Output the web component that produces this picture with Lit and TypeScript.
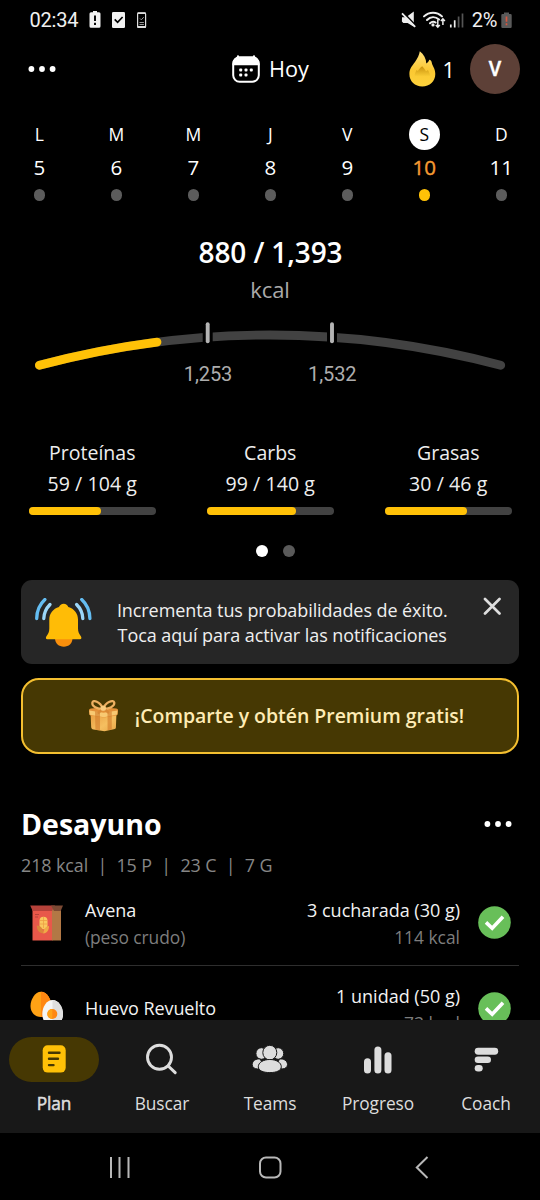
import { LitElement, html, css, svg, nothing } from "lit";
import { customElement, property } from "lit/decorators.js";

const dots = html`<svg width="28" height="8" viewBox="0 0 28 8" fill="#fff">
  <circle cx="3.400" cy="4" r="2.900"/><circle cx="14" cy="4" r="2.900"/><circle cx="24.600" cy="4" r="2.900"/></svg>`;

const statusLeft = html`<svg width="60" height="20" viewBox="0 0 60 20">
  <path fill="#f2f2f2" d="M4 2.2h2V1h4v1.200h2a1.500 1.500 0 0 1 1.500 1.500v12.600a1.500 1.500 0 0 1-1.500 1.500H4a1.500 1.500 0 0 1-1.500-1.500V3.700A1.500 1.500 0 0 1 4 2.200z"/>
  <path stroke="#000" stroke-width="1.900" d="M8 5.500v5.500M8 12.800v2.100"/>
  <rect x="25" y="2" width="13" height="16" rx="1.300" fill="#f2f2f2"/>
  <path d="M27.700 9.300l2.900 3 5-5.300" fill="none" stroke="#000" stroke-width="1.700"/>
  <rect x="50.600" y="3" width="8" height="14.400" rx="1" fill="none" stroke="#ddd" stroke-width="1.200"/>
  <path d="M50.500 3.200h8.200M50.500 17h8.200" stroke="#ddd" stroke-width="1.800"/>
  <path d="M53 8.500l1.300 1.300 2.400-2.600M52.500 12.500h4.400M52.500 14.500h4.400" fill="none" stroke="#999" stroke-width="1"/>
</svg>`;

const statusIcons = html`<svg width="65" height="20" viewBox="0 0 65 20" fill="none">
  <path fill="#eee" d="M1 7.200h4l7.800-5.600v15.200L6.600 13H2.300L.9 11.500z"/>
  <path d="M2.400 2.600l12.200 12.600" stroke="#000" stroke-width="1.600"/>
  <path d="M1 3.300l13.200 13.500" stroke="#eee" stroke-width="1.800"/>
  <g stroke="#eee" stroke-width="2" stroke-linecap="round">
    <path d="M23 6.400c5.100-5 12.900-5 18 0M26 10c3.500-3.500 8.300-3.700 12-.4M29 13.200c1.700-1.700 3.900-1.800 5.600-.7"/></g>
  <circle cx="32" cy="14.900" r="1.600" fill="#eee"/>
  <path d="M36.800 9.500v7.500M34.800 15l2 2.200 2-2.200M41.900 15V9M39.900 11l2-2.200 2 2.200" stroke="#eee" stroke-width="1.500"/>
  <path d="M49.800 17.600v-3M53.700 17.600V10.300" stroke="#eee" stroke-width="1.700"/>
  <path d="M57.600 17.600V6.500M61.500 17.600V3.400" stroke="#555" stroke-width="1.700"/>
</svg>`;

const batteryIcon = html`<svg width="11" height="17" viewBox="0 0 11 17">
  <path fill="#5a5a5a" d="M1.500 2H3V.5h5V2h1.500A1.200 1.200 0 0 1 10.700 3.200v11.600a1.200 1.200 0 0 1-1.200 1.200h-8A1.200 1.200 0 0 1 .3 14.800V3.200A1.200 1.200 0 0 1 1.500 2z"/>
  <path d="M5.500 4.500v5.300M5.500 11.300v2" stroke="#d9573f" stroke-width="1.700"/></svg>`;

const calendarIcon = html`<svg width="28" height="28" viewBox="0 0 28 28">
  <path d="M6 1.300v3M22 1.300v3" stroke="#fff" stroke-width="2.200" stroke-linecap="round"/>
  <rect x="1.200" y="2.500" width="25.600" height="24.300" rx="6.500" fill="none" stroke="#fff" stroke-width="2"/>
  <path fill="#fff" d="M.5 10.200V8a6.500 6.500 0 0 1 6.500-6.500h14A6.500 6.500 0 0 1 27.500 8v2.200z"/>
  <g fill="#fff"><rect x="7.200" y="13.400" width="3" height="3" rx="1"/><rect x="12.500" y="13.400" width="3" height="3" rx="1"/><rect x="17.800" y="13.400" width="3" height="3" rx="1"/>
  <rect x="7.200" y="18.500" width="3" height="3" rx="1"/><rect x="12.500" y="18.500" width="3" height="3" rx="1"/></g></svg>`;

const flameIcon = html`<svg width="27" height="36" viewBox="0 0 27 36">
  <defs><linearGradient id="fl" x1="0" y1="0" x2="0" y2="1"><stop offset="0" stop-color="#ffe07a"/><stop offset=".55" stop-color="#fbc832"/><stop offset="1" stop-color="#fdd23c"/></linearGradient>
  <linearGradient id="fi" x1="0" y1="0" x2="0" y2="1"><stop offset="0" stop-color="#c8910c"/><stop offset="1" stop-color="#fbcd36"/></linearGradient></defs>
  <path fill="url(#fl)" d="M10.800.3C14.800 3.500 17.200 7.500 17.300 12.500c1.500-.7 2.300-1.900 3-3.700 1.500.3 2.200 1.300 2.500 3 .5 3.300 3.500 5.700 3.500 11.200C26.300 30.500 20.600 35.500 13.300 35.500S.3 30.300.4 23c0-5.500 2.900-8.300 5.600-12 2.500-3.500 4.200-6.700 4.800-10.700z"/>
  <path fill="url(#fi)" d="M13.200 15.200c1.500 1.600 3 3.300 3.700 5 .8-.1 1.400-.5 2-1.100 1.200 2.200 2.400 4.200 2 6.500H5.800c-.4-2.300.5-4.200 1.800-6.500.4.500.8.800 1.300.9.900-2 2.500-3.400 4.300-4.800z"/></svg>`;

const bellIcon = html`<svg width="58" height="52" viewBox="0 0 58 52" fill="none">
  <path fill="#f98f0c" d="M20 40h17.500c0 5.500-3.800 8.700-8.700 8.700S20 45.500 20 40z"/>
  <path fill="#ffbc06" d="M28.700 5.700c2.300 0 4 1.300 4.600 3.400 6 1.700 9.700 6.500 9.700 12.700v8.500c0 3.500 1 5.500 3 8.200.8 1.300.3 2.800-1 2.800H12.300c-1.300 0-1.800-1.500-1-2.800 2-2.700 3-4.700 3-8.200v-8.500c0-6.200 3.700-11 9.700-12.700.7-2.100 2.400-3.400 4.700-3.400z"/>
  <g stroke="#64bdf2" stroke-width="3.300" stroke-linecap="round"><path d="M9.900 1.500C4.500 6.500 1.800 12.500 1.700 20.500M46.700 1.500c5.400 5 8.100 11 8.200 19"/></g>
  <g stroke="#9bd6f8" stroke-width="3.300" stroke-linecap="round"><path d="M15 6.500c-4 4-6 8.500-6.200 14M41.600 6.500c4 4 6 8.500 6.200 14"/></g></svg>`;

const giftIcon = html`<svg width="31" height="33" viewBox="0 0 31 33">
  <defs><linearGradient id="gb" x1="0" y1="0" x2="1" y2="1"><stop offset="0" stop-color="#e89a3e"/><stop offset=".6" stop-color="#f5bf60"/><stop offset="1" stop-color="#e9a748"/></linearGradient></defs>
  <path fill="url(#gb)" d="M2.500 13l13 3 13-3-.6 15.500c0 1-1 1.600-2 1.800L16.500 32.300l-11-1.800c-1.400-.3-2.200-1-2.300-2.200z"/>
  <path fill="#e39038" d="M1 11.500c0-1.300 1-1.800 2-1.900l12.500-1 12.600.8c1.200.1 1.900.7 1.900 1.800l-.3 3.800c-.1.900-.7 1.300-1.700 1.500L16 18.600 3 16.600c-1-.2-1.700-.6-1.700-1.600z"/>
  <path fill="#f8c972" d="M1.300 11.500l14.200 2.200 14-2.300-.3 4L16 18.200 1.700 15.700z"/>
  <path fill="#d07a2a" d="M7 12.300l5 .8v18.500l-4.600-.8zM19.500 13l4.300-.7v18.200l-4.200.8z" opacity=".6"/>
  <path d="M15 10C9 10 3.800 7.500 4.300 3.700 5 .3 12 2.500 15 9.500 18 2.500 25.500.3 26.300 3.500 27 7.300 21 10 15 10z" fill="none" stroke="#eeb062" stroke-width="2.200"/>
  <path d="M15 9.500l-5 5M15.500 9.500l5.500 4.500" stroke="#d98935" stroke-width="2.300"/>
  <rect x="12.500" y="6.700" width="5.500" height="5" rx="2" fill="#f9cc7e"/></svg>`;

const oatsIcon = html`<svg width="34" height="36" viewBox="0 0 34 36">
  <path fill="#e8584a" d="M2.500 4h20v31.500h-20z"/><path fill="#b27845" d="M22 4h9v31.500h-9z"/>
  <path fill="#b5423a" d="M.2.600H25L22 6H2.700z"/><path fill="#7c4a34" d="M21 .6h12L30.700 6H24z"/>
  <path d="M5 9.500h4M5 12h3" stroke="#b5423a" stroke-width="1"/>
  <rect x="9.500" y="11.700" width="8" height="12.500" rx="4" fill="#fac85f"/>
  <path d="M10 15.500h7M10 19h7M13.500 12v11" stroke="#eda044" stroke-width=".8"/>
  <path fill="#dc873b" d="M6.800 20.500c4 .3 6.500 3 6.700 8-4-.3-6.700-3-6.700-8z"/><path fill="#f0a947" d="M19 21c-3.600.5-5.700 3-5.700 7.500 3.900-.5 5.700-3.500 5.700-7.500z"/></svg>`;

const eggIcon = html`<svg width="34" height="36" viewBox="0 0 34 36">
  <path fill="#ffa215" d="M11 .7c6 0 10.500 8 10.500 14.300S17 26 11 26 .5 21.500.5 15 5 .7 11 .7z"/>
  <path fill="#ff8711" d="M11 .7c6 0 10.500 8 10.500 14.300S17 26 11 26z"/>
  <path fill="#f5f5f5" d="M22.500 9C28.500 9 33 16 33 23s-4.500 12-10.500 12S12.300 30 12.300 23 16.500 9 22.500 9z"/>
  <path fill="#dedede" d="M22.500 9C28.500 9 33 16 33 23s-4.500 12-10.500 12z"/>
  <circle cx="22.300" cy="23" r="5" fill="#ff8711"/><path d="M22.300 18a5 5 0 0 0 0 10z" fill="#ffa215"/></svg>`;

const checkIcon = html`<svg width="33" height="33" viewBox="0 0 33 33">
  <circle cx="16.500" cy="16.500" r="16.300" fill="#68bf59"/>
  <path d="M8 16.400l6.200 5.900L25 10.800" fill="none" stroke="#fff" stroke-width="3.600"/></svg>`;

const navIcons: Record<string, unknown> = {
  plan: svg`<rect x="6.700" y="2.300" width="23" height="27.300" rx="5" fill="#ffc107"/>
    <path d="M13 9.800h10.500M13 15.800h9M13 22.100h4.500" stroke="#463803" stroke-width="2.400" stroke-linecap="round"/>`,
  search: svg`<circle cx="15.500" cy="14.300" r="12" fill="none" stroke="#ddd" stroke-width="2.900"/>
    <path d="M24.200 23l7 6.700" stroke="#ddd" stroke-width="3" stroke-linecap="round"/>`,
  teams: svg`<g fill="#ddd" stroke="#181818" stroke-width="1">
    <ellipse cx="9.400" cy="10.500" rx="5.500" ry="5.800"/><ellipse cx="26.200" cy="10.500" rx="5.500" ry="5.800"/>
    <path d="M.2 21.500c0-4 4-6 8-5.500l4 8-6.500 2C2 25.800.2 24 .2 21.500zM35.500 21.500c0-4-4-6-8-5.500l-4 8 6.500 2c3.700-.2 5.500-2 5.500-4.500z"/>
    <ellipse cx="17.800" cy="9.600" rx="7" ry="7.300"/>
    <path d="M6.300 23.800c0-4.300 5-7.300 11.500-7.300s11.500 3 11.500 7.300c0 3.700-4.700 5.800-11.500 5.800S6.300 27.500 6.300 23.800z"/></g>`,
  progress: svg`<g fill="#ddd"><rect x="4" y="15.200" width="7" height="15.300" rx="3.500"/><rect x="14.400" y="3.500" width="7" height="27" rx="3.500"/><rect x="24.500" y="9.200" width="7" height="21.300" rx="3.500"/></g>`,
  coach: svg`<g fill="#ddd"><rect x="6.700" y="4.800" width="23.500" height="6.900" rx="3.400"/><rect x="6.700" y="13.400" width="16.300" height="6.600" rx="3.300"/><rect x="6.700" y="21.900" width="8" height="6.600" rx="3.300"/></g>`,
};

@customElement("kcal-arc")
class KcalArc extends LitElement {
  static styles = css`
    :host { display: block; height: 70px; }
    text { font: 20px Roboto, sans-serif; letter-spacing: -0.100px; }
  `;
  render() {
    return html`<svg width="540" height="70" viewBox="0 320 540 70" fill="none">
      <path d="M39.400 365.300A893.400 893.400 0 0 1 500.700 365.300" stroke="#424242" stroke-width="8.800" stroke-linecap="round"/>
      <path d="M39.400 365.300A893.400 893.400 0 0 1 157 342.100" stroke="#ffc107" stroke-width="8.800" stroke-linecap="round"/>
      ${[207.7, 332].map((x, i) => svg`
        <path d="M${x} 328V350" stroke="#000" stroke-width="10"/>
        <path d="M${x} 324.200V341.300" stroke="#b4b4b4" stroke-width="3.900" stroke-linecap="round"/>
        <text x=${x + 0.3} y="381" text-anchor="middle" fill="#adadad">${["1,253", "1,532"][i]}</text>`)}
    </svg>`;
  }
}

@customElement("macro-stat")
class MacroStat extends LitElement {
  @property() name = "";
  @property() value = "";
  @property({ type: Number }) pct = 0;
  static styles = css`
    :host { display: block; width: 127.500px; text-align: center; color: #eee; }
    .name, .value { font-size: 19.500px; line-height: 31px; white-space: nowrap; }
    .value { letter-spacing: 0.080px; }
    .track { margin-top: 8px; height: 7.500px; border-radius: 4px; background: #424242; }
    .fill { height: 100%; border-radius: 4px; background: #ffc107; }
  `;
  render() {
    return html`<div class="name">${this.name}</div><div class="value">${this.value}</div>
      <div class="track"><div class="fill" style="width:${this.pct}%"></div></div>`;
  }
}

@customElement("food-row")
class FoodRow extends LitElement {
  @property() name = "";
  @property() note = "";
  @property() amount = "";
  @property() kcal = "";
  @property({ attribute: false }) icon: unknown = nothing;
  static styles = css`
    :host { display: flex; align-items: center; height: 83.500px; padding-top: 1.500px; margin: 0 21px; border-bottom: 1px solid #2e2e2e; font-size: 18px; line-height: 27.500px; }
    .icon { width: 64px; box-sizing: border-box; padding-left: 9px; display: flex; }
    .name { flex: 1; color: #f2f2f2; letter-spacing: -0.080px; }
    .name.noted { padding-top: 3px; }
    .amount { text-align: right; padding-top: 3px; color: #f2f2f2; margin-right: 18px; }
    .dim { color: #7d7d7d; font-size: 17.400px; }
    .check { display: flex; margin-right: 8px; }
  `;
  render() {
    return html`<div class="icon">${this.icon}</div>
      <div class="name ${this.note ? "noted" : ""}">${this.name}${this.note ? html`<div class="dim">${this.note}</div>` : nothing}</div>
      <div class="amount">${this.amount}<div class="dim">${this.kcal}</div></div>
      <div class="check">${checkIcon}</div>`;
  }
}

@customElement("app-root")
class AppRoot extends LitElement {
  static styles = css`
    :host { display: flex; flex-direction: column; width: 540px; height: 1200px; overflow: hidden; background: #000; color: #fff; font-family: "Open Sans", "Noto Sans", sans-serif; }
    svg { display: block; flex: none; }
    .status { height: 40px; flex: none; display: flex; align-items: center; padding: 0 28.500px 0 29.500px; font: 20px/40px Roboto, sans-serif; color: #f0f0f0; box-sizing: border-box; }
    .clock { width: 57.500px; letter-spacing: -0.200px; }
    .grow { flex: 1; }
    .pct { margin: 0 3.500px 0 6px; letter-spacing: -0.300px; }
    .page { height: 980px; flex: none; overflow: hidden; }
    .header { display: grid; grid-template-columns: 1fr auto 1fr; align-items: center; height: 58px; padding: 0 20px; font-size: 21.700px; }
    .menu { padding-left: 8px; }
    .today { display: flex; align-items: center; gap: 9px; line-height: 28px; padding-left: 1px; }
    .right { display: flex; align-items: center; justify-content: flex-end; }
    .streak { margin: 0 15px 0 7px; }
    .avatar { width: 50px; height: 50px; border-radius: 50%; background: #5d4037; display: flex; align-items: center; justify-content: center; font: 500 20px Roboto, sans-serif; -webkit-text-stroke: 0.300px #fff; }
    .week { display: grid; grid-template-columns: repeat(7, 77px); padding: 20.500px 0 0 0.800px; }
    .day { display: flex; flex-direction: column; align-items: center; }
    .letter { width: 31px; height: 31px; border-radius: 50%; text-align: center; font-size: 17.500px; line-height: 31px; }
    .num { font-size: 20.500px; line-height: 32px; margin-top: 1px; }
    .dot { width: 11.500px; height: 11.500px; border-radius: 6px; background: #5c5c5c; margin-top: 6.500px; }
    .on .letter { background: #fff; color: #000; }
    .on .num { color: #f59a32; -webkit-text-stroke: 0.400px #f59a32; }
    .on .dot { background: #ffc107; }
    .total { margin-top: 31.500px; padding-left: 1px; text-align: center; font-size: 28px; line-height: 40px; font-weight: 600; letter-spacing: -0.120px; }
    .unit { text-align: center; font-size: 22px; line-height: 34px; color: #aaa; letter-spacing: -0.150px; margin-bottom: 14px; }
    .macros { display: flex; justify-content: space-between; padding: 47px 28px 0 28.500px; }
    .pager { display: flex; justify-content: center; gap: 15px; margin: 30.500px 0 22.500px 10px; }
    .pager i { width: 12px; height: 12px; border-radius: 50%; background: #5a5a5a; }
    .pager i:first-child { background: #fff; }
    .notice { margin: 0 21px; height: 84.500px; box-sizing: border-box; border-radius: 11px; background: #262626; display: flex; padding: 17px 18px 0 13.500px; color: #efefef; }
    .notice p { flex: 1; margin: 0; padding: 1px 11px 0 0; text-align: center; font-size: 18px; line-height: 25px; letter-spacing: -0.080px; white-space: nowrap; }
    .ring { padding-top: 1px; }
    .share { margin: 14px 21px 0; height: 75.500px; box-sizing: border-box; border: 2px solid #f4bf30; border-radius: 18px; background: #463803; color: #ffecb5; display: flex; align-items: center; justify-content: center; gap: 16px; padding-left: 12px; font-size: 19.450px; font-weight: 600; }
    .title { display: flex; align-items: center; justify-content: space-between; margin: 49px 28px 0 21px; font-size: 28.500px; line-height: 42px; font-weight: 700; }
    .summary { margin: 6px 21px 0; height: 29px; font-size: 17.900px; line-height: 28px; color: #868686; display: flex; gap: 9.300px; letter-spacing: -0.080px; }
    .tabs { height: 112.500px; flex: none; background: #181818; display: grid; grid-template-columns: repeat(5, 1fr); box-sizing: border-box; padding-top: 17px; color: #ddd; font-size: 17.300px; }
    .tab { display: flex; flex-direction: column; align-items: center; }
    .pill { width: 90px; height: 45px; border-radius: 23px; display: flex; align-items: center; justify-content: center; }
    .active .pill { background: #463803; }
    .active .label { -webkit-text-stroke: 0.500px #ddd; }
    .label { line-height: 28px; margin-top: 8px; letter-spacing: -0.080px; }
    .system { flex: 1; display: flex; justify-content: center; }
  `;
  render() {
    const days = [["L", 5], ["M", 6], ["M", 7], ["J", 8], ["V", 9], ["S", 10], ["D", 11]];
    const tabs = [["plan", "Plan"], ["search", "Buscar"], ["teams", "Teams"], ["progress", "Progreso"], ["coach", "Coach"]];
    return html`
      <div class="status"><span class="clock">02:34</span>${statusLeft}<span class="grow"></span>${statusIcons}<span class="pct">2%</span>${batteryIcon}</div>
      <div class="page">
        <div class="header">
          <div class="menu">${dots}</div>
          <div class="today">${calendarIcon}<span>Hoy</span></div>
          <div class="right">${flameIcon}<span class="streak">1</span><span class="avatar">V</span></div>
        </div>
        <div class="week">${days.map(([l, n]) => html`<div class="day ${n === 10 ? "on" : ""}">
          <span class="letter">${l}</span><span class="num">${n}</span><span class="dot"></span></div>`)}</div>
        <div class="total">880 / 1,393</div>
        <div class="unit">kcal</div>
        <kcal-arc></kcal-arc>
        <div class="macros">
          <macro-stat name="Proteínas" value="59 / 104 g" pct="57"></macro-stat>
          <macro-stat name="Carbs" value="99 / 140 g" pct="70.5"></macro-stat>
          <macro-stat name="Grasas" value="30 / 46 g" pct="65"></macro-stat>
        </div>
        <div class="pager"><i></i><i></i></div>
        <div class="notice"><div class="ring">${bellIcon}</div><p>Incrementa tus probabilidades de éxito.<br>Toca aquí para activar las notificaciones</p>
          <svg width="18" height="18" viewBox="0 0 18 18"><path d="M2 2l14.500 14.500M16.500 2L2 16.500" stroke="#ddd" stroke-width="2.700" stroke-linecap="round"/></svg></div>
        <div class="share">${giftIcon}<span>¡Comparte y obtén Premium gratis!</span></div>
        <div class="title"><span>Desayuno</span>${dots}</div>
        <div class="summary"><span>218 kcal</span><span>|</span><span>15 P</span><span>|</span><span>23 C</span><span>|</span><span>7 G</span></div>
        <food-row name="Avena" note="(peso crudo)" amount="3 cucharada (30 g)" kcal="114 kcal" .icon=${oatsIcon}></food-row>
        <food-row name="Huevo Revuelto" amount="1 unidad (50 g)" kcal="73 kcal" .icon=${eggIcon}></food-row>
      </div>
      <div class="tabs">${tabs.map(([k, t]) => html`<div class="tab ${k === "plan" ? "active" : ""}">
        <div class="pill"><svg width="36" height="34" viewBox="0 0 36 34">${navIcons[k as string]}</svg></div><span class="label">${t}</span></div>`)}</div>
      <div class="system"><svg width="540" height="67" viewBox="0 1133 540 67" fill="none" stroke="#b8b8b8" stroke-width="2">
        <path d="M111 1157v21M119.500 1157v21M128.500 1157v21"/><rect x="260" y="1157.500" width="20.500" height="20" rx="6"/><path d="M427.500 1157l-10.700 10.500 10.700 10.500"/></svg></div>`;
  }
}
